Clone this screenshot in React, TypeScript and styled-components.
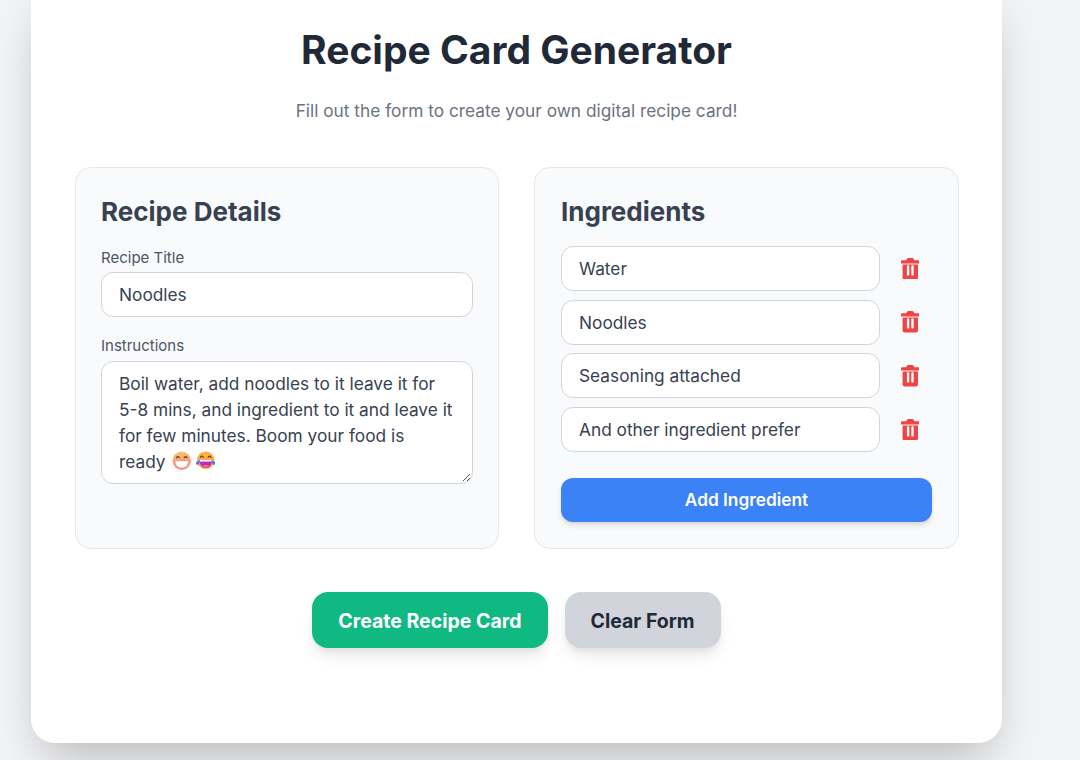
import React from 'react';
import styled, { createGlobalStyle } from 'styled-components';

const GlobalStyle = createGlobalStyle`
  html, body {
    margin: 0;
    height: 760px;
    overflow: hidden;
    background: #f3f4f6;
    font-family: Inter, "Liberation Sans", sans-serif;
  }
  * { box-sizing: border-box; }
`;

const Page = styled.div`
  width: 1080px;
  height: 760px;
  padding-left: 31px;
  overflow: hidden;
`;

const Card = styled.main`
  width: 971px;
  height: 763px;
  margin-top: -20px;
  padding: 47px 44px 0;
  background: #fff;
  border-radius: 24px;
  box-shadow: 0 25px 50px -12px rgba(0, 0, 0, 0.25);
`;

const Title = styled.h1`
  margin: 0;
  font-size: 39px;
  line-height: 46px;
  font-weight: 700;
  color: #1f2937;
  text-align: center;
`;

const Subtitle = styled.p`
  margin: 26px 0 0;
  font-size: 17.3px;
  line-height: 24px;
  color: #6b7280;
  text-align: center;
`;

const Columns = styled.div`
  display: grid;
  grid-template-columns: 424px 425px;
  gap: 35px;
  margin-top: 44px;
`;

const Panel = styled.section`
  height: 382px;
  padding: 26px;
  background: #f9fafb;
  border: 1px solid #e5e7eb;
  border-radius: 16px;
`;

const DetailsPanel = styled(Panel)`
  padding-left: 25px;
  padding-right: 25.5px;
`;

const PanelTitle = styled.h2`
  margin: 0;
  font-size: 26px;
  line-height: 36px;
  font-weight: 700;
  color: #374151;
`;

const FieldLabel = styled.label`
  display: block;
  font-size: 15px;
  line-height: 20px;
  font-weight: 400;
  color: #4b5563;
`;

const Field = styled.div<{ $top: number }>`
  margin-top: ${p => p.$top}px;
`;

const TextInput = styled.input`
  display: block;
  width: 100%;
  height: 45px;
  padding: 0 17px;
  background: #fff;
  border: 1px solid #d1d5db;
  border-radius: 12px;
  font: 400 17.3px Inter, "Liberation Sans", sans-serif;
  color: #374151;
  outline: none;
`;

const TitleInput = styled(TextInput)`
  margin-top: 4px;
`;

const TextArea = styled.div`
  position: relative;
  height: 123px;
  margin-top: 5px;
  padding: 8.5px 17px;
  background: #fff;
  border: 1px solid #d1d5db;
  border-radius: 12px;
  font-size: 17.3px;
  line-height: 26px;
  color: #374151;
`;

const InlineEmoji = styled.svg<{ $gap: number }>`
  display: inline-block;
  width: 19.5px;
  height: 19.5px;
  vertical-align: -3px;
  margin-left: ${p => p.$gap}px;
`;

const ResizeHandle = styled.svg`
  position: absolute;
  right: 1px;
  bottom: 1px;
  width: 9px;
  height: 9px;
`;

const IngredientList = styled.div`
  display: flex;
  flex-direction: column;
  gap: 8.7px;
  margin-top: 16px;
`;

const IngredientRow = styled.div`
  display: flex;
  align-items: center;
`;

const IngredientInput = styled(TextInput)`
  width: 319px;
  flex: none;
`;

const TrashIcon = styled.svg`
  width: 18.6px;
  height: 21.4px;
  margin-left: 20.700px;
  flex: none;
`;

const AddButton = styled.button`
  display: block;
  width: 100%;
  height: 44px;
  margin-top: 26px;
  padding: 0 0 1px;
  border: 0;
  border-radius: 12px;
  background: #3b82f6;
  color: #fff;
  font: 600 17.3px Inter, "Liberation Sans", sans-serif;
  box-shadow: 0 4px 6px -1px rgba(0, 0, 0, 0.12), 0 2px 4px -1px rgba(0, 0, 0, 0.06);
`;

const Actions = styled.div`
  display: flex;
  justify-content: center;
  gap: 17px;
  margin-top: 43px;
`;

const ActionButton = styled.button<{ $primary?: boolean }>`
  height: 56px;
  padding: 1px 26px 0;
  border: 0;
  border-radius: 16px;
  background: ${p => (p.$primary ? '#10b981' : '#d1d5db')};
  color: ${p => (p.$primary ? '#fff' : '#1f2937')};
  font: 700 19.5px Inter, "Liberation Sans", sans-serif;
  box-shadow: 0 10px 15px -3px rgba(0, 0, 0, 0.1), 0 4px 6px -2px rgba(0, 0, 0, 0.05);
`;

const ingredients = ['Water', 'Noodles', 'Seasoning attached', 'And other ingredient prefer'];

const Trash = () => (
  <TrashIcon viewBox="0 0 18.600 21.400" aria-hidden="true">
    <path
      fill="#ef4444"
      fillRule="evenodd"
      d="M6 .8C6.300.3 6.700 0 7.300 0h4c.6 0 1 .3 1.300.8L13.400 2.200H17.600a1 1 0 0 1 1 1V5a.6.6 0 0 1-.6.6H.6A.6.6 0 0 1 0 5V3.200a1 1 0 0 1 1-1H5.200zM1.600 6.400h15.400V19.400a2 2 0 0 1-2 2H3.600a2 2 0 0 1-2-2zM5.900 8.400v8a1.200 1.200 0 0 0 2.400 0v-8a1.200 1.200 0 0 0-2.400 0zM10.300 8.400v8a1.200 1.200 0 0 0 2.400 0v-8a1.200 1.200 0 0 0-2.400 0z"
    />
  </TrashIcon>
);

const GrinEmoji = () => (
  <InlineEmoji $gap={2} viewBox="0 0 20 20" aria-hidden="true">
    <defs>
      <linearGradient id="grinFace" x1="0" y1="0" x2="0" y2="1">
        <stop offset="0" stopColor="#fbc06a" />
        <stop offset="1" stopColor="#f78f8f" />
      </linearGradient>
    </defs>
    <circle cx="10" cy="10" r="9.500" fill="url(#grinFace)" />
    <path d="M3 10h14c0 5-3 7.500-7 7.500S3 15 3 10z" fill="#fff" stroke="#d9706a" strokeWidth="0.6" />
    <path d="M4.500 7c.6-1.600 2.400-1.600 3 0M12.500 7c.6-1.600 2.400-1.600 3 0" fill="none" stroke="#5b3a2e" strokeWidth="1.200" strokeLinecap="round" />
  </InlineEmoji>
);

const LaughEmoji = () => (
  <InlineEmoji $gap={4} viewBox="0 0 20 20" aria-hidden="true">
    <circle cx="10" cy="9.500" r="9" fill="#fbb03b" />
    <path d="M3.500 9h13c0 5-2.800 8.500-6.500 8.500S3.500 14 3.500 9z" fill="#c02bb5" />
    <path d="M4 9h12v1.800H4z" fill="#fff" />
    <path d="M6.500 15.500c1-1.500 6-1.500 7 0-1 1.300-2.200 2-3.500 2s-2.500-.7-3.500-2z" fill="#f06292" />
    <path d="M4.500 6.500c.6-1.600 2.400-1.600 3 0M12.500 6.500c.6-1.600 2.400-1.600 3 0" fill="none" stroke="#5b3a2e" strokeWidth="1.200" strokeLinecap="round" />
    <path d="M0 12c1-1.800 2.600-2.200 3.600-1.800.3 1.800-.5 4-2.100 4S-.3 13 0 12zM20 12c-1-1.800-2.600-2.200-3.600-1.800-.3 1.800.5 4 2.100 4s1.800-1.200 1.500-2.200z" fill="#3b82f6" />
  </InlineEmoji>
);

export default function App() {
  return (
    <Page>
      <GlobalStyle />
      <Card>
        <Title>Recipe Card Generator</Title>
        <Subtitle>Fill out the form to create your own digital recipe card!</Subtitle>
        <Columns>
          <DetailsPanel>
            <PanelTitle>Recipe Details</PanelTitle>
            <Field $top={18}>
              <FieldLabel>Recipe Title</FieldLabel>
              <TitleInput defaultValue="Noodles" />
            </Field>
            <Field $top={19}>
              <FieldLabel>Instructions</FieldLabel>
              <TextArea>
                Boil water, add noodles to it leave it for
                <br />
                5-8 mins, and ingredient to it and leave it
                <br />
                for few minutes. Boom your food is
                <br />
                ready <GrinEmoji />
                <LaughEmoji />
                <ResizeHandle viewBox="0 0 9 9" aria-hidden="true">
                  <path d="M8 1 1 8M8 5 5 8" stroke="#555" strokeWidth="1" />
                </ResizeHandle>
              </TextArea>
            </Field>
          </DetailsPanel>
          <Panel>
            <PanelTitle>Ingredients</PanelTitle>
            <IngredientList>
              {ingredients.map(item => (
                <IngredientRow key={item}>
                  <IngredientInput defaultValue={item} />
                  <Trash />
                </IngredientRow>
              ))}
            </IngredientList>
            <AddButton>Add Ingredient</AddButton>
          </Panel>
        </Columns>
        <Actions>
          <ActionButton $primary>Create Recipe Card</ActionButton>
          <ActionButton>Clear Form</ActionButton>
        </Actions>
      </Card>
    </Page>
  );
}
